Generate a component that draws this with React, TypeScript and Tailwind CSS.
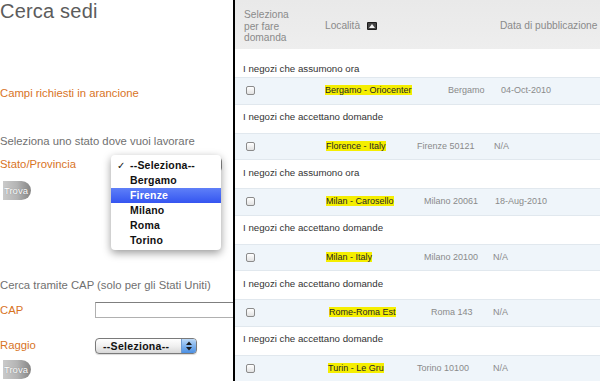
import React from "react";

type Row = {
  label: string;
  name: string;
  city: string;
  date: string;
  nameCls: string;
  cityCls: string;
};

const rows: Row[] = [
  { label: "I negozi che assumono ora", name: "Bergamo - Oriocenter", city: "Bergamo", date: "04-Oct-2010", nameCls: "w-[123px] pl-0", cityCls: "w-[53px]" },
  { label: "I negozi che accettano domande", name: "Florence - Italy", city: "Firenze 50121", date: "N/A", nameCls: "w-[92px] pl-[1px]", cityCls: "w-[77px]" },
  { label: "I negozi che assumono ora", name: "Milan - Carosello", city: "Milano 20061", date: "18-Aug-2010", nameCls: "w-[99px] pl-[1px]", cityCls: "w-[71px]" },
  { label: "I negozi che accettano domande", name: "Milan - Italy", city: "Milano 20100", date: "N/A", nameCls: "w-[99px] pl-[1px]", cityCls: "w-[69px]" },
  { label: "I negozi che accettano domande", name: "Rome-Roma Est", city: "Roma 143", date: "N/A", nameCls: "w-[106px] pl-[4px]", cityCls: "w-[62px]" },
  { label: "I negozi che accettano domande", name: "Turin - Le Gru", city: "Torino 10100", date: "N/A", nameCls: "w-[92px] pl-[3px]", cityCls: "w-[76px]" },
];

function TrovaButton({ className }: { className: string }) {
  return (
    <div
      className={
        "relative w-[28px] h-[19px] ml-[3px] shrink-0 rounded-l-[2px] rounded-r-full bg-gradient-to-r from-[#cacaca] via-[#b4b4b4] to-[#858585] text-white text-[9.5px] leading-[19px] pl-[1px] whitespace-nowrap [text-shadow:0_0_1px_rgba(0,0,0,0.35)] " +
        className
      }
    >
      Trova
    </div>
  );
}

function Stepper() {
  return (
    <div className="w-[15px] h-full shrink-0 rounded-r-[3px] bg-gradient-to-b from-[#bcd9f7] via-[#7fb2ec] to-[#4a8fe3] flex items-center justify-center border-l border-[#6f9bd0]">
      <svg width="6" height="10" viewBox="0 0 6 10">
        <polygon points="0,4 3,0.5 6,4" fill="#1a1a1a" />
        <polygon points="0,6 3,9.5 6,6" fill="#1a1a1a" />
      </svg>
    </div>
  );
}

export default function App() {
  return (
    <div className="flex w-[600px] h-[381px] overflow-hidden bg-white font-['Liberation_Sans',Arial,sans-serif]">
      {/* Left panel */}
      <div className="relative w-[233px] h-full shrink-0 overflow-hidden flex flex-col">
        <div className="text-[20px] leading-[22px] text-[#5c5c5c] tracking-[0.2px] whitespace-nowrap">
          Cerca sedi
        </div>
        <div className="mt-[64px] text-[11.3px] leading-[14px] text-[#d8741f] whitespace-nowrap">
          Campi richiesti in arancione
        </div>
        <div className="mt-[34px] text-[11.3px] leading-[14px] text-[#707070] whitespace-nowrap">
          Seleziona uno stato dove vuoi lavorare
        </div>
        <div className="mt-[9px] h-[16px] flex items-start">
          <div className="w-[112px] shrink-0 text-[11.3px] leading-[14px] text-[#d8741f] whitespace-nowrap">
            Stato/Provincia
          </div>
          <div className="w-[110px] h-[15px] shrink-0 flex rounded-[4px] border border-[#8a8a8a] bg-gradient-to-b from-white to-[#e6e6e6]">
            <div className="flex-1" />
            <Stepper />
          </div>
        </div>
        <TrovaButton className="mt-[8px]" />

        <div className="mt-[77.5px] text-[11.3px] leading-[14px] text-[#707070] whitespace-nowrap">
          Cerca tramite CAP (solo per gli Stati Uniti)
        </div>
        <div className="mt-[10.5px] h-[16px] flex items-start">
          <div className="w-[95px] shrink-0 pt-[0.5px] text-[11.3px] leading-[14px] text-[#d8741f] whitespace-nowrap">
            CAP
          </div>
          <div className="w-[139px] h-[16px] shrink-0 border border-[#b0b0b0] border-t-[#7f7f7f] bg-white" />
        </div>
        <div className="mt-[20px] h-[16px] flex items-start">
          <div className="w-[95px] shrink-0 text-[11.3px] leading-[14px] text-[#d8741f] whitespace-nowrap">
            Raggio
          </div>
          <div className="w-[102px] h-[16px] shrink-0 flex rounded-[4px] border border-[#7a7a7a] bg-gradient-to-b from-white via-[#f0f0f0] to-[#d8d8d8] shadow-[0_1px_1px_rgba(0,0,0,0.15)]">
            <div className="flex-1 pl-[7px] text-[10.5px] leading-[14px] font-bold text-[#111] whitespace-nowrap tracking-[0.3px]">
              --Seleziona--
            </div>
            <Stepper />
          </div>
        </div>
        <TrovaButton className="mt-[6px]" />

        {/* Open dropdown menu */}
        <div className="absolute left-[111px] top-[155px] w-[110px] h-[95px] bg-white rounded-[4px] shadow-[0_3px_9px_rgba(0,0,0,0.4)] pt-[3px] flex flex-col">
          {["--Seleziona--", "Bergamo", "Firenze", "Milano", "Roma", "Torino"].map((item, i) => (
            <div
              key={item}
              className={
                i === 2
                  ? "relative h-[15px] pl-[19px] text-[10.5px] leading-[15px] font-bold text-white bg-gradient-to-b from-[#5f7ff8] to-[#3554f0] tracking-[0.2px]"
                  : "relative h-[15px] pl-[19px] text-[10.5px] leading-[15px] font-bold text-[#111] tracking-[0.2px]"
              }
            >
              {i === 0 && (
                <span className="absolute left-[6px] top-0 text-[10px] leading-[15px] font-['DejaVu_Sans',sans-serif]">✓</span>
              )}
              {item}
            </div>
          ))}
        </div>
      </div>

      {/* Divider */}
      <div className="w-[2px] h-full bg-black shrink-0" />

      {/* Right panel */}
      <div className="flex-1 h-full flex flex-col">
        <div className="h-[49px] shrink-0 flex items-start bg-gradient-to-b from-[#e9e9e9] to-[#eeeeee] text-[10.2px] leading-[11.5px] text-[#8a8a8a]">
          <div className="w-[90px] shrink-0 pl-[9px] mt-[9px]">
            Seleziona
            <br />
            per fare
            <br />
            domanda
          </div>
          <div className="w-[175px] shrink-0 mt-[20px] flex items-center whitespace-nowrap">
            <span>Località</span>
            <svg className="ml-[7px]" width="10" height="8" viewBox="0 0 10 8">
              <rect x="0" y="0" width="10" height="8" rx="1" fill="#1c1c1c" />
              <rect x="1" y="1" width="8" height="6" fill="#444" />
              <polygon points="2,6 5,2 8,6" fill="#f2f2f2" />
            </svg>
          </div>
          <div className="mt-[20px] whitespace-nowrap">Data di pubblicazione</div>
        </div>

        {rows.map((r, i) => (
          <React.Fragment key={i}>
            <div
              className={
                i === 0
                  ? "h-[28px] shrink-0 flex items-end pb-[2px] pl-[8px] bg-white text-[9.7px] leading-[12px] text-[#333] whitespace-nowrap"
                  : "h-[28px] shrink-0 flex items-center pb-[3px] pl-[8px] bg-white text-[9.7px] leading-[12px] text-[#333] whitespace-nowrap"
              }
            >
              {r.label}
            </div>
            <div className="h-[27.5px] shrink-0 flex items-center bg-[#eff5fa] border-t border-b border-[#e1e8ee] text-[9px] leading-[11px] whitespace-nowrap">
              <div className="w-[90px] shrink-0 pl-[11px] flex items-center">
                <span className="block w-[9px] h-[9px] rounded-[2px] border border-[#8b8b8b] bg-gradient-to-b from-white to-[#e2e2e2]" />
              </div>
              <div className={"shrink-0 " + r.nameCls}>
                <span className="bg-[#f5ee00] text-[#262626]">{r.name}</span>
              </div>
              <div className={"shrink-0 text-[#8a8a8a] " + r.cityCls}>{r.city}</div>
              <div className="text-[#8a8a8a]">{r.date}</div>
            </div>
          </React.Fragment>
        ))}
      </div>
    </div>
  );
}
